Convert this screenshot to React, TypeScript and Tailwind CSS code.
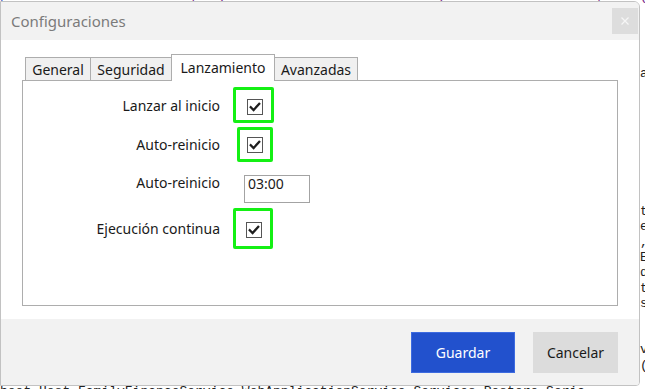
import React from "react";

function Check() {
  return (
    <div className="w-[16px] h-[16px] border border-[#555555] bg-white flex items-center justify-center">
      <svg width="12" height="12" viewBox="0 0 12 12">
        <polyline points="1.8,6.2 4.6,9 10.2,2.8" fill="none" stroke="#1e1e1e" strokeWidth="2.3" strokeLinecap="square" />
      </svg>
    </div>
  );
}

export default function App() {
  const rightLetters = ["a'", "", "", "", "", "", "", "", "", "t", "e", ",", "E", "d", "t", "s", "", "", "v", "("];
  return (
    <div className="relative w-[645px] h-[389px] bg-white overflow-hidden font-['Noto_Sans',sans-serif]">
      {/* background page text */}
      <div className="absolute left-0 top-[-13px] whitespace-nowrap font-['Liberation_Mono',monospace] text-[13px] text-[#7a2a8a]">
        <span className="text-[#3050c0]">public</span> <span className="text-[#a02080]">static</span> void Configure(IServiceCollection services) <span className="text-[#c03030]">=&gt;</span> services.AddSingleton();
      </div>
      <div className="absolute left-[640px] top-[66px] flex flex-col font-['Liberation_Mono',monospace] text-[13px] leading-[15.35px] text-[#222222]">
        {rightLetters.map((l, i) => (
          <span key={i} className="h-[15.35px]">{l}</span>
        ))}
      </div>
      <div className="absolute left-0 top-[384px] whitespace-nowrap font-['Liberation_Mono',monospace] text-[13px] leading-[15px] text-[#222222]">
        boot.Host.FamilyFinanceService.WebApplicationService.Services.Restore.Seria
      </div>

      {/* dialog */}
      <div className="absolute left-0 top-[1px] w-[640px] h-[385px] border border-[#c2c2c2] rounded-tr-[6px] rounded-br-[4px] overflow-hidden bg-white flex flex-col">
        <div className="h-[38px] bg-[#f2f2f2] flex items-center justify-between pl-[10px] pr-[1px]">
          <span className="text-[15px] text-[#7b7b7b]">Configuraciones</span>
          <div className="w-[26px] h-[26px] bg-[#dddddd] flex items-center justify-center">
            <svg width="8" height="8" viewBox="0 0 8 8">
              <path d="M0.5 0.5 L7.5 7.5 M7.5 0.5 L0.5 7.5" stroke="#f6f6f6" strokeWidth="1.3" />
            </svg>
          </div>
        </div>

        <div className="flex-1 flex flex-col pl-[21px] pr-[21px] pt-[14px] bg-white">
          <div className="flex items-end h-[26px] ml-[3px] text-[14px] text-[#1a1a1a]">
            <div className="w-[66px] h-[23px] border border-b-0 border-[#adadad] bg-[#f0f0f0] flex items-center justify-center">General</div>
            <div className="w-[82px] h-[23px] -ml-px border border-b-0 border-[#adadad] bg-[#f0f0f0] flex items-center justify-center">Seguridad</div>
            <div className="relative z-10 w-[104px] h-[27px] -ml-px -mb-px border border-b-0 border-[#adadad] bg-white flex items-start justify-center pt-[2px]">Lanzamiento</div>
            <div className="w-[84px] h-[23px] -ml-px border border-b-0 border-[#adadad] bg-[#f0f0f0] flex items-center justify-center">Avanzadas</div>
          </div>

          <div className="h-[226px] border border-[#adadad] bg-white flex flex-col pt-[6px] text-[14px] text-[#1a1a1a]">
            <div className="flex items-center h-[36px]">
              <div className="w-[197px] text-right">Lanzar al inicio</div>
              <div className="ml-[13px] w-[41px] h-[36px] border-[3px] border-[#14f014] rounded-[2px] flex items-center justify-center pl-[2px] pt-[4px]">
                <Check />
              </div>
            </div>
            <div className="flex items-center h-[35px] mt-[4px]">
              <div className="w-[197px] text-right">Auto-reinicio</div>
              <div className="ml-[17px] w-[36px] h-[35px] border-[3px] border-[#14f014] rounded-[2px] flex items-center justify-center">
                <Check />
              </div>
            </div>
            <div className="flex items-start h-[28px] mt-[13px]">
              <div className="w-[197px] text-right leading-[16px]">Auto-reinicio</div>
              <div className="ml-[24px] w-[66px] h-[28px] border border-[#a3a3a3] pl-[3px] leading-[16px]">03:00</div>
            </div>
            <div className="flex items-center h-[41px] mt-[5px]">
              <div className="w-[197px] text-right">Ejecución continua</div>
              <div className="ml-[13px] w-[40px] h-[41px] border-[3px] border-[#14f014] rounded-[2px] flex items-center justify-center pl-[2px] pt-[3px]">
                <Check />
              </div>
            </div>
          </div>
        </div>

        <div className="h-[66px] bg-[#f2f2f2] flex justify-end items-start pt-[13px] pr-[21px] gap-[18px] text-[14px]">
          <div className="w-[104px] h-[41px] bg-[#2251cd] border border-[#3d6be0] text-white flex items-center justify-center">Guardar</div>
          <div className="w-[85px] h-[41px] bg-[#dcdcdc] text-[#1a1a1a] flex items-center justify-center">Cancelar</div>
        </div>
      </div>
    </div>
  );
}
